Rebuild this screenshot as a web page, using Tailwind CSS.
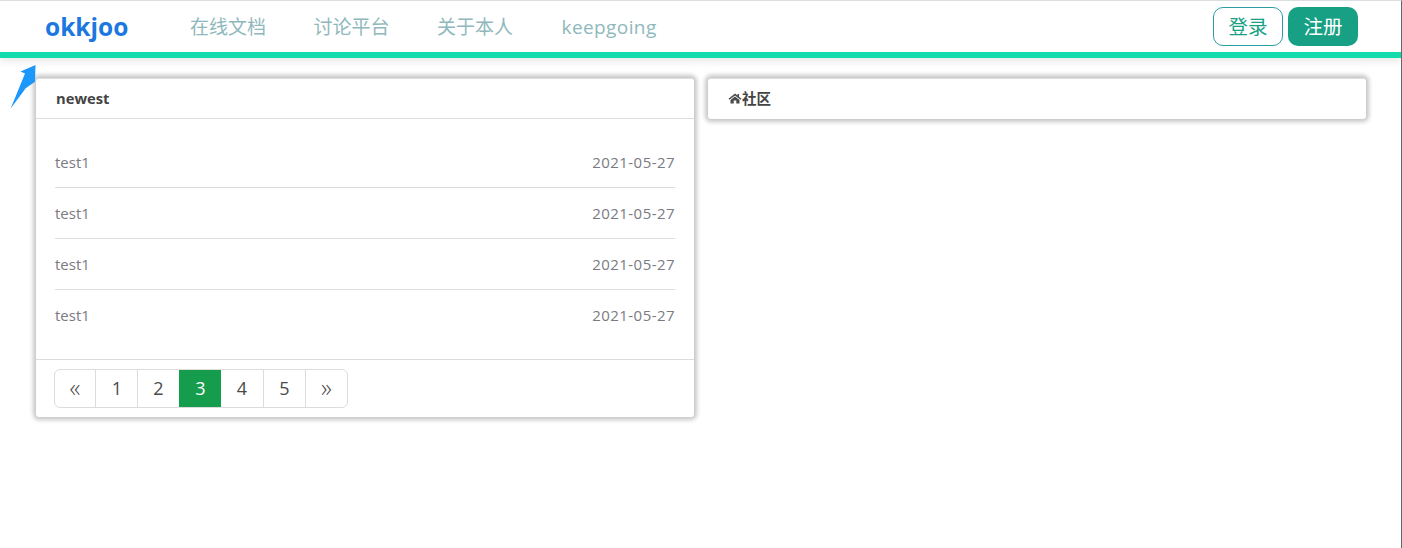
<!DOCTYPE html>
<html lang="zh">
<head>
<meta charset="utf-8">
<script src="https://cdn.jsdelivr.net/npm/@tailwindcss/browser@4"></script>
</head>
<body class="bg-white font-['Open_Sans','Noto_Sans_CJK_SC',sans-serif]">
<div class="relative h-[548px] w-[1402px] overflow-hidden border-r border-r-[#666] border-t border-t-[#dcdde0]">
  <header class="flex h-[57px] items-center border-b-[6px] border-b-[#12dcab] bg-white pl-[45px] pr-[43px] shadow-[0_3px_8px_rgba(0,0,0,0.1)]">
    <a class="w-[145px] text-[24.5px] leading-[32px] font-bold text-[#1d77e0]">okkjoo</a>
    <nav class="flex gap-[47.5px] text-[19px] leading-[28px] text-[#8fb8bc]">
      <a>在线文档</a><a>讨论平台</a><a>关于本人</a><a class="ml-[1px] tracking-[0.4px]">keepgoing</a>
    </nav>
    <div class="ml-auto flex gap-[5px]">
      <button class="h-[39px] w-[70px] rounded-[10px] border border-[#2b9fa5] bg-white text-[19.5px] text-[#18a085]">登录</button>
      <button class="h-[39px] w-[70px] rounded-[10px] bg-[#18a085] text-[19.5px] text-white">注册</button>
    </div>
  </header>

  <svg class="absolute left-[10px] top-[62px] z-10" width="28" height="46" viewBox="0 0 28 46"><path d="M25.5 2 L10.5 8.5 L15 10.5 L0.7 45.5 L15.7 25.3 L25 18.7 Z" fill="#1c97fb"/></svg>

  <main class="flex items-start gap-[14px] pl-[36px] pt-[20px]">
    <section class="w-[658px] rounded-[3px] border-t border-t-[#ddd] bg-white shadow-[0_0_4px_3px_rgba(0,0,0,0.22)]">
      <h2 class="flex h-[40px] items-center border-b border-b-[#dcdcdc] pl-[20px] text-[14.75px] font-bold text-[#444]">newest</h2>
      <ul class="px-[19px] pt-[18px] pb-[18px]">
        <li class="flex h-[51px] items-center justify-between border-b border-b-[#dcdcdc] text-[15px] text-[#7a7a82]"><span>test1</span><span class="tracking-[0.45px]">2021-05-27</span></li>
        <li class="flex h-[51px] items-center justify-between border-b border-b-[#dcdcdc] text-[15px] text-[#7a7a82]"><span>test1</span><span class="tracking-[0.45px]">2021-05-27</span></li>
        <li class="flex h-[51px] items-center justify-between border-b border-b-[#dcdcdc] text-[15px] text-[#7a7a82]"><span>test1</span><span class="tracking-[0.45px]">2021-05-27</span></li>
        <li class="flex h-[51px] items-center justify-between text-[15px] text-[#7a7a82]"><span>test1</span><span class="tracking-[0.45px]">2021-05-27</span></li>
      </ul>
      <div class="border-t border-t-[#dcdcdc] px-[18px] pt-[9px] pb-[9px]">
        <div class="flex h-[39px] w-[294px] overflow-hidden rounded-[6px] border border-[#dcdcdc] text-[18px] text-[#4a4a4a]">
          <a class="flex w-[41px] items-center justify-center border-r border-r-[#dcdcdc] pb-[2px] text-[25px] font-light">«</a>
          <a class="flex w-[42px] items-center justify-center border-r border-r-[#dcdcdc] pl-[1px]">1</a>
          <a class="flex w-[41px] items-center justify-center">2</a>
          <a class="flex w-[42px] items-center justify-center bg-[#159c4c] pl-[1px] text-white">3</a>
          <a class="flex w-[43px] items-center justify-center border-r border-r-[#dcdcdc]">4</a>
          <a class="flex w-[42px] items-center justify-center border-r border-r-[#dcdcdc]">5</a>
          <a class="flex flex-1 items-center justify-center pb-[2px] text-[25px] font-light">»</a>
        </div>
      </div>
    </section>

    <section class="w-[658px] rounded-[3px] border-t border-t-[#ddd] bg-white shadow-[0_0_4px_3px_rgba(0,0,0,0.22)]">
      <h2 class="flex h-[40px] items-center pb-[1px] pl-[20px] text-[14.5px] font-bold text-[#444]">
        <svg width="14" height="11" viewBox="0 0 13 11"><path d="M6.5 0.5 L0 5.8 L1 6.8 L6.5 2.4 L12 6.8 L13 5.8 L10.5 3.7 V1 H9 V2.5 Z M2 7 L6.5 3.4 L11 7 V10.5 H7.8 V7.5 H5.2 V10.5 H2 Z" fill="#4a4a4a"/></svg>社区
      </h2>
    </section>
  </main>
</div>
</body>
</html>
